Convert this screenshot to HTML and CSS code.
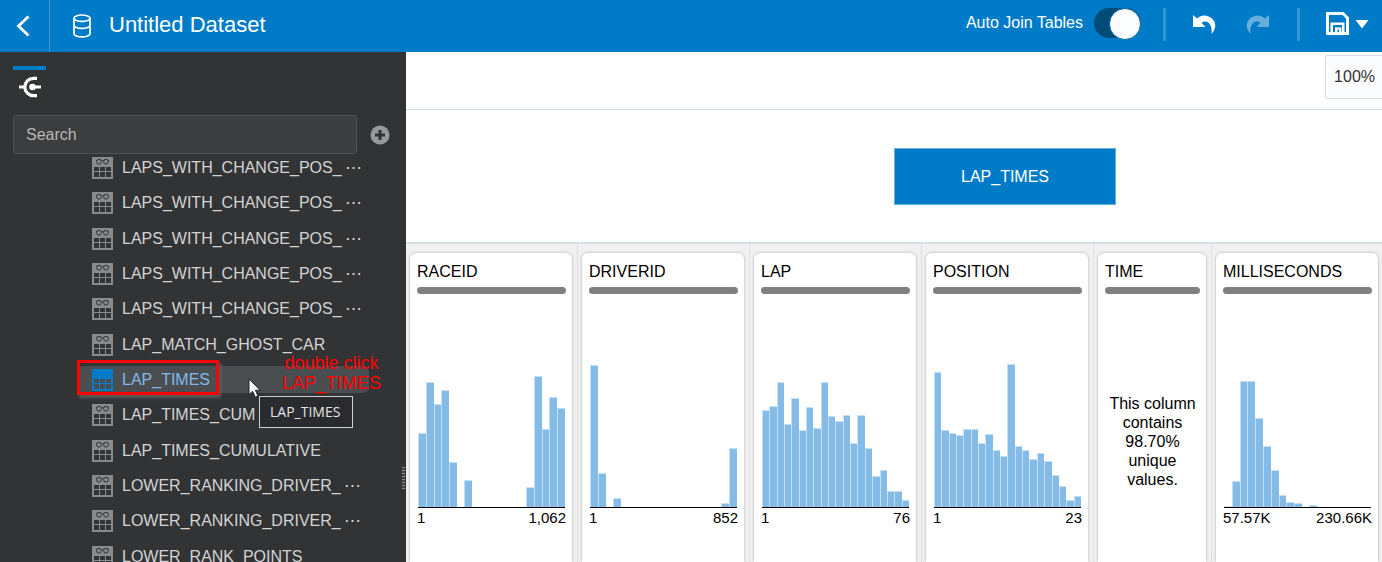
FILE: index.html
```html
<!DOCTYPE html>
<html lang="en">
<head>
<meta charset="utf-8">
<title>Untitled Dataset</title>
<link rel="stylesheet" href="styles.css">
</head>
<body>
<svg class="defs" aria-hidden="true">
  <symbol id="table-view" viewBox="0 0 21 22">
    <path fill="currentColor" fill-rule="evenodd" d="M0 0h21v22H0zM2 10v4h5v-4zM8 10v4h5v-4zM14 10v4h5v-4zM2 15v5h5v-5zM8 15v5h5v-5zM14 15v5h5v-5z"/>
    <g class="glasses"><circle cx="7" cy="4.7" r="2.4"/><circle cx="14" cy="4.7" r="2.4"/><path d="M9.2 3.8q1.3-.8 2.6 0M4.6 4V3M16.4 4V3"/></g>
  </symbol>
  <symbol id="table-plain" viewBox="0 0 21 22">
    <path fill="currentColor" fill-rule="evenodd" d="M0 0h21v22H0zM2 10v4h5v-4zM8 10v4h5v-4zM14 10v4h5v-4zM2 15v5h5v-5zM8 15v5h5v-5zM14 15v5h5v-5z"/>
  </symbol>
</svg>

<header class="topbar">
  <button class="icon-button back" aria-label="Back"><svg width="14" height="22" viewBox="0 0 14 22"><path d="M12.500 1.500 2.500 11l10 9.500" fill="none" stroke="#fff" stroke-width="2.800"/></svg></button>
  <svg class="database" width="18" height="24" viewBox="0 0 18 24" fill="none" stroke="#fff" stroke-width="1.700"><ellipse cx="9" cy="4.200" rx="8" ry="3.200"/><path d="M1 4.200v15.500c0 1.800 3.600 3.200 8 3.200s8-1.400 8-3.200V4.200M1 11.200c0 1.800 3.600 3.200 8 3.200s8-1.400 8-3.200"/></svg>
  <h1 class="title">Untitled Dataset</h1>
  <label class="auto-join">Auto Join Tables<input class="switch" type="checkbox" role="switch" checked></label>
  <span class="divider"></span>
  <button class="icon-button undo" aria-label="Undo"><svg width="24" height="21" viewBox="0 0 24 21"><path fill="#fff" d="M1 1v12h12.500L9.500 8.800C14 5.500 21 9 19.500 20 24 15.500 24.500 9 20.500 5 16 .5 9 .2 5.200 4.600z"/></svg></button>
  <button class="icon-button redo" aria-label="Redo" disabled><svg width="24" height="21" viewBox="0 0 24 21"><path fill="#fff" d="M23 1v12H10.500l4-4.200C10 5.500 3 9 4.500 20 0 15.500-.5 9 3.500 5 8 .5 15 .2 18.800 4.600z"/></svg></button>
  <span class="divider"></span>
  <button class="icon-button save" aria-label="Save"><svg width="43" height="24" viewBox="0 0 43 24"><path fill="#fff" fill-rule="evenodd" d="M0 0h17.500L23 5.500V23H0zM3 3v17h1.500v-9.500h14V20H20V6.500L16.500 3zM7 13v7h2v-4.500h6.500V20h.5v-7zM11.500 17.500V20H13v-2.500z"/><path fill="#fff" d="M29.500 8h13L36 16.500z"/></svg></button>
</header>

<div class="workspace">
  <aside class="sidebar">
    <button class="tab" aria-label="Connections"><svg width="23" height="22" viewBox="0 0 23 22"><path d="M18 2.300h-3.500a8.700 8.700 0 0 0 0 17.400H18M0 11h6M12 11h10" fill="none" stroke="#fff" stroke-width="3.200"/><circle cx="13.500" cy="11" r="3.300" fill="#fff"/></svg></button>
    <div class="search-row">
      <input class="search" type="search" placeholder="Search" aria-label="Search">
      <button class="icon-button" aria-label="Add"><svg width="20" height="20" viewBox="0 0 20 20"><circle cx="10" cy="10" r="9.500" fill="#97999b"/><path d="M10 5v10M5 10h10" stroke="#323335" stroke-width="3"/></svg></button>
    </div>
    <ul class="tables">
      <li class="table-item"><svg class="table-icon"><use href="#table-view"/></svg>LAPS_WITH_CHANGE_POS_<span class="more">⋯</span></li>
      <li class="table-item"><svg class="table-icon"><use href="#table-view"/></svg>LAPS_WITH_CHANGE_POS_<span class="more">⋯</span></li>
      <li class="table-item"><svg class="table-icon"><use href="#table-view"/></svg>LAPS_WITH_CHANGE_POS_<span class="more">⋯</span></li>
      <li class="table-item"><svg class="table-icon"><use href="#table-view"/></svg>LAPS_WITH_CHANGE_POS_<span class="more">⋯</span></li>
      <li class="table-item"><svg class="table-icon"><use href="#table-view"/></svg>LAPS_WITH_CHANGE_POS_<span class="more">⋯</span></li>
      <li class="table-item"><svg class="table-icon"><use href="#table-view"/></svg>LAP_MATCH_GHOST_CAR</li>
      <li class="table-item selected"><svg class="table-icon"><use href="#table-plain"/></svg>LAP_TIMES
        <span class="highlight"></span>
        <span class="note">double click<br>LAP_TIMES</span>
        <svg class="pointer" width="14" height="21" viewBox="0 0 14 21"><path d="M1 1v15.500l3.600-3.300 2.600 6 2.800-1.200-2.600-5.800h5z" fill="#fff" stroke="#222" stroke-width="1"/></svg>
        <span class="tooltip" role="tooltip">LAP_TIMES</span>
      </li>
      <li class="table-item"><svg class="table-icon"><use href="#table-view"/></svg>LAP_TIMES_CUM</li>
      <li class="table-item"><svg class="table-icon"><use href="#table-view"/></svg>LAP_TIMES_CUMULATIVE</li>
      <li class="table-item"><svg class="table-icon"><use href="#table-view"/></svg>LOWER_RANKING_DRIVER_<span class="more">⋯</span></li>
      <li class="table-item"><svg class="table-icon"><use href="#table-view"/></svg>LOWER_RANKING_DRIVER_<span class="more">⋯</span></li>
      <li class="table-item"><svg class="table-icon"><use href="#table-view"/></svg>LOWER_RANK_POINTS</li>
    </ul>
    <span class="grip"></span>
  </aside>

  <main class="main">
    <div class="zoom-bar"><button class="zoom">100%</button></div>
    <div class="canvas"><button class="node">LAP_TIMES</button></div>
    <div class="columns">
      <section class="column"><div class="card"><h2 class="name">RACEID</h2><div class="quality"></div>
        <div class="plot" data-values="74,125,103,117,45,0,27,0,0,0,0,0,0,0,0,20,131,78,110,99"></div>
        <div class="range"><span>1</span><span>1,062</span></div></div></section>
      <section class="column"><div class="card"><h2 class="name">DRIVERID</h2><div class="quality"></div>
        <div class="plot" data-values="142,34,0,9,0,0,0,0,0,0,0,0,0,0,0,0,0,0,4,59"></div>
        <div class="range"><span>1</span><span>852</span></div></div></section>
      <section class="column"><div class="card"><h2 class="name">LAP</h2><div class="quality"></div>
        <div class="plot" data-values="97,101,125,83,109,77,100,79,125,91,86,92,64,92,59,31,37,16,16,7"></div>
        <div class="range"><span>1</span><span>76</span></div></div></section>
      <section class="column"><div class="card"><h2 class="name">POSITION</h2><div class="quality"></div>
        <div class="plot" data-values="135,77,74,72,78,78,64,73,57,51,143,61,57,48,54,46,32,21,7,11"></div>
        <div class="range"><span>1</span><span>23</span></div></div></section>
      <section class="column narrow"><div class="card"><h2 class="name">TIME</h2><div class="quality"></div>
        <p class="message">This column contains 98.70% unique values.</p></div></section>
      <section class="column"><div class="card"><h2 class="name">MILLISECONDS</h2><div class="quality"></div>
        <div class="plot" data-values="1,26,126,126,89,61,37,12,5,4,0,2,0,0,0,0,0,0,0,0"></div>
        <div class="range"><span>57.57K</span><span>230.66K</span></div></div></section>
    </div>
  </main>
</div>
<script src="charts.js"></script>
</body>
</html>
```

FILE: styles.css
```css
* { box-sizing: border-box; }

body {
  margin: 0;
  height: 100vh;
  display: flex;
  flex-direction: column;
  overflow: hidden;
  font-family: "Liberation Sans", Arial, sans-serif;
  font-size: 16px;
  line-height: 20px;
  color: #000;
  background: #fff;
}

button { font: inherit; margin: 0; padding: 0; cursor: pointer; }
.defs { display: none; }
.icon-button { display: flex; border: 0; background: none; }

/* Top bar */
.topbar {
  display: flex;
  align-items: center;
  flex: none;
  height: 52px;
  padding-right: 13px;
  background: #007bc8;
  color: #fff;
}
.back {
  width: 50px;
  height: 100%;
  align-items: center;
  justify-content: center;
  padding-right: 4px;
  border-right: 1px solid #409cd6;
}
.database { margin-left: 23px; }
.title { margin: 0 auto 2px 18px; font-size: 22px; line-height: 26px; font-weight: 400; }
.auto-join { display: flex; align-items: center; gap: 11px; margin-bottom: 6px; }
.switch {
  appearance: none;
  display: flex;
  justify-content: flex-end;
  width: 47px;
  height: 30px;
  margin: 0;
  border-radius: 15px;
  background: #004b78;
}
.switch::before {
  content: "";
  width: 30px;
  height: 30px;
  border: 1px solid #0a6aa8;
  border-radius: 50%;
  background: #fcfdfe;
}
.divider { width: 3px; height: 33px; margin: 0 26px 4px 22px; background: #3395d3; }
.undo, .redo, .save { margin-bottom: 4px; }
.redo { margin: 0 5px 4px 30px; opacity: .4; }

/* Sidebar */
.workspace { display: flex; flex: 1; min-height: 0; }
.sidebar {
  position: relative;
  display: flex;
  flex-direction: column;
  flex: none;
  width: 406px;
  padding: 14px 15px 0 13px;
  background: #323335;
  color: #d3d4d5;
}
.tab {
  flex: none;
  display: flex;
  align-items: flex-end;
  justify-content: center;
  width: 33px;
  height: 33px;
  border: 0;
  border-top: 4px solid #007bc8;
  padding: 0 0 1px 2px;
  background: none;
}
.search-row { display: flex; align-items: center; gap: 13px; margin-top: 16px; }
.search {
  width: 344px;
  height: 39px;
  padding: 0 12px;
  border: 1px solid #505254;
  border-radius: 3px;
  background: #3c3d3f;
  color: #d3d4d5;
  font: inherit;
}
.search::placeholder { color: #b6b7b7; opacity: 1; }
.tables {
  display: flex;
  flex-direction: column;
  gap: 8px;
  flex: 1;
  min-height: 0;
  margin: 0 -15px 0 0;
  padding: 0 37px 0 64px;
  list-style: none;
  overflow: hidden;
}
.table-item {
  position: relative;
  display: flex;
  align-items: center;
  flex: none;
  height: 27px;
  padding-left: 15px;
  border-radius: 6px;
  white-space: nowrap;
}
.table-item:nth-child(3n) { margin-top: 1px; }
.table-icon { flex: none; width: 21px; height: 22px; margin-right: 9px; color: #888b8e; }
.more { margin-left: 3px; font-size: 17px; }
.glasses { fill: none; stroke: #323335; stroke-width: 1; }
.selected { z-index: 1; background: #4b4e51; color: #81b9e8; }
.selected .table-icon { color: #007bc8; }
.highlight {
  position: absolute;
  left: 0;
  top: -6px;
  width: 142px;
  height: 35px;
  border: 3px solid #f00;
  box-shadow: 2px 3px 3px #5a5c5e;
}
.note {
  position: absolute;
  left: 205px;
  top: -13px;
  color: #f00;
  font-size: 18px;
  line-height: 20px;
  text-align: center;
}
.pointer { position: absolute; left: 171px; top: 12px; }
.tooltip {
  position: absolute;
  left: 182px;
  top: 30px;
  padding: 5px 12px 5px 10px;
  border: 1px solid #d0d0d0;
  background: #2a2b2f;
  color: #e4e4e4;
  font-family: "Open Sans", "Noto Sans", sans-serif;
  font-size: 14px;
  line-height: 20px;
}
.grip {
  position: absolute;
  right: 1px;
  top: 415px;
  width: 3px;
  height: 22px;
  background: repeating-linear-gradient(#8d8f91 0 1px, #3f4143 1px 3px);
}

/* Main area */
.main { display: flex; flex-direction: column; flex: 1; min-width: 0; }
.zoom-bar {
  display: flex;
  justify-content: flex-end;
  flex: none;
  height: 58px;
  padding-top: 3px;
  border-bottom: 1px solid #d7dfe6;
}
.zoom {
  height: 44px;
  padding: 0 7px 0 8px;
  border: 1px solid #d3dde6;
  border-right: 0;
  border-radius: 3px 0 0 3px;
  background: #fbfcfd;
  color: #333;
}
.canvas { position: relative; flex: none; height: 132px; }
.node {
  position: absolute;
  left: 50%;
  top: 38px;
  width: 222px;
  height: 57px;
  border: 1px solid #66b0de;
  background: #007bc8;
  color: #fff;
}
.columns {
  display: flex;
  flex: 1;
  min-height: 0;
  border-top: 2px solid #d7dfe6;
  background: #f1f1f1;
  overflow: hidden;
}
.column {
  display: flex;
  flex: none;
  width: 172px;
  padding: 9px 5px 0 4px;
  border-right: 1px solid #dfe1e2;
}
.column:last-child { border-right-color: transparent; }
.narrow { width: 118px; }
.card {
  flex: 1;
  min-width: 0;
  padding: 9px 6px 0 7px;
  border-radius: 6px 6px 0 0;
  background: #fff;
  box-shadow: 0 0 3px #aaa;
}
.name { margin: 0; font-size: 16px; font-weight: 400; }
.quality { height: 7px; margin-top: 5px; border-radius: 4px; background: #808080; }
.plot {
  display: flex;
  align-items: flex-end;
  height: 214px;
  margin: 0 1px;
  border-bottom: 1px solid #000;
}
.bar { flex: 1; background: #85bbe7; }
.bar.filled { border: solid #c5dff4; border-width: 1px 0 0 1px; }
.range { display: flex; justify-content: space-between; font-size: 15px; }
.message { margin: 100px 0 0; line-height: 19px; text-align: center; }
```

FILE: charts.js
```js
document.querySelectorAll(".plot").forEach((plot) => {
  plot.dataset.values.split(",").map(Number).forEach((value) => {
    const bar = document.createElement("span");
    bar.className = value ? "bar filled" : "bar";
    bar.style.height = value + "px";
    plot.append(bar);
  });
});
```
